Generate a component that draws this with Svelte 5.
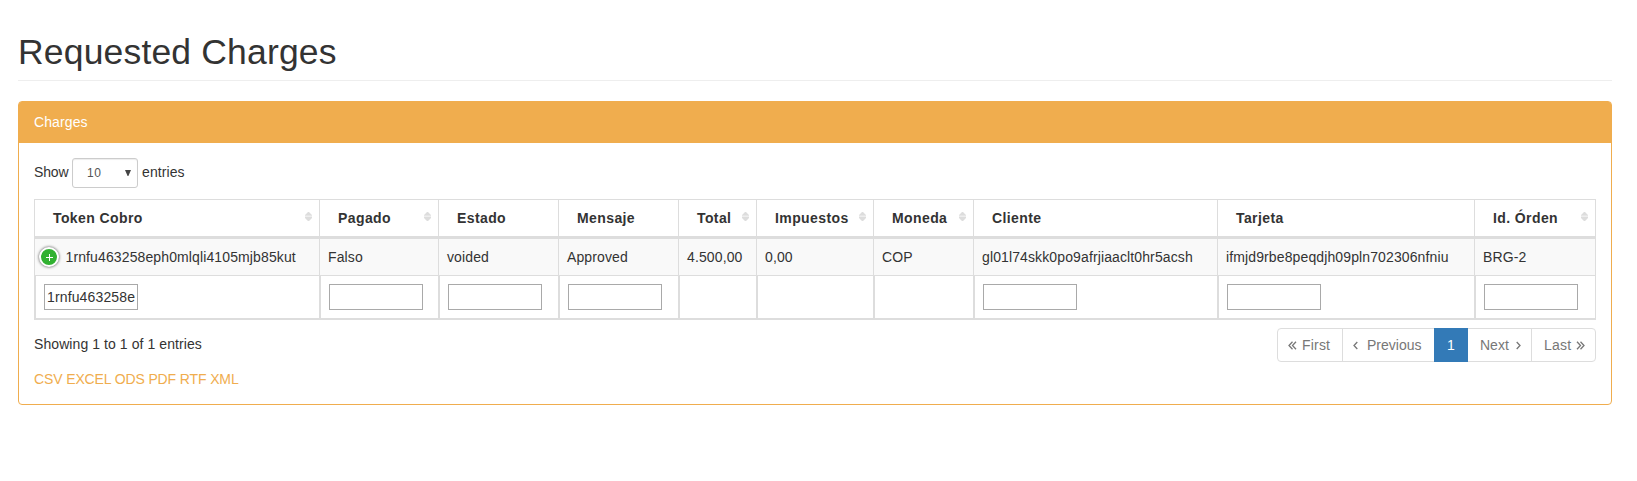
<script>
  const columns = [
    { label: 'Token Cobro', width: 285, sort: true, value: '1rnfu463258eph0mlqli4105mjb85kut', filter: '1rnfu463258eph0mlqli4105mjb85kut', expand: true },
    { label: 'Pagado', width: 119, sort: true, value: 'Falso', filter: '' },
    { label: 'Estado', width: 120, value: 'voided', filter: '' },
    { label: 'Mensaje', width: 120, value: 'Approved', filter: '' },
    { label: 'Total', width: 78, sort: true, value: '4.500,00' },
    { label: 'Impuestos', width: 117, sort: true, value: '0,00' },
    { label: 'Moneda', width: 100, sort: true, value: 'COP' },
    { label: 'Cliente', width: 244, value: 'gl01l74skk0po9afrjiaaclt0hr5acsh', filter: '' },
    { label: 'Tarjeta', width: 257, value: 'ifmjd9rbe8peqdjh09pln702306nfniu', filter: '' },
    { label: 'Id. Órden', width: 122, sort: true, value: 'BRG-2', filter: '' }
  ];
  const formats = ['CSV', 'EXCEL', 'ODS', 'PDF', 'RTF', 'XML'];
</script>

<main>
  <h1>Requested Charges</h1>
  <section class="panel">
    <header>Charges</header>
    <div class="body">
      <div class="length">
        <span class="show">Show</span>
        <span class="select"><span>10</span><svg width="6" height="6" viewBox="0 0 6 6"><path d="M0 0h6L3.4 6h-.8z" fill="#444" /></svg></span>
        <span class="entries">entries</span>
      </div>
      <table>
        <colgroup>
          {#each columns as c}<col style:width="{c.width}px" />{/each}
        </colgroup>
        <thead>
          <tr>
            {#each columns as c}
              <th><div class="head"><span>{c.label}</span>
                {#if c.sort}<svg width="7" height="9" viewBox="0 0 7 9"><path d="M3 0h1l3 3v1H0V3zM0 5h7v1L4 9H3L0 6z" fill="#ddd" /><path d="M0 3.5h7v1.5H0z" fill="#eee" /></svg>{/if}
              </div></th>
            {/each}
          </tr>
        </thead>
        <tbody>
          <tr>
            {#each columns as c}
              <td><div class="cell">
                {#if c.expand}<span class="plus"><svg width="7" height="7" viewBox="0 0 7 7"><path d="M3 0h1v3h3v1H4v3H3V4H0V3h3z" fill="#fff" /></svg></span>{/if}
                <span>{c.value}</span>
              </div></td>
            {/each}
          </tr>
        </tbody>
        <tfoot>
          <tr>
            {#each columns as c}
              <td>{#if c.filter !== undefined}<input type="text" value={c.filter} aria-label={c.label} />{/if}</td>
            {/each}
          </tr>
        </tfoot>
      </table>
      <div class="bottom">
        <div class="info">Showing 1 to 1 of 1 entries</div>
        <nav>
          <a class="first" href="#top"><svg width="9" height="9" viewBox="0 0 9 9"><path d="M4.5.7L1 4.5l3.5 3.8M8 .7L4.5 4.5 8 8.3" /></svg><span>First</span></a>
          <a class="prev" href="#top"><svg width="5" height="9" viewBox="0 0 5 9"><path d="M4.3 1L1 4.5 4.3 8" /></svg><span>Previous</span></a>
          <a class="current" href="#top">1</a>
          <a class="next" href="#top"><span>Next</span><svg width="5" height="9" viewBox="0 0 5 9"><path d="M.7 1L4 4.5.7 8" /></svg></a>
          <a class="last" href="#top"><span>Last</span><svg width="9" height="9" viewBox="0 0 9 9"><path d="M1 .7l3.5 3.8L1 8.3M4.5.7L8 4.5 4.5 8.3" /></svg></a>
        </nav>
      </div>
      <div class="export">{#each formats as f}<a href="#top">{f}</a>{' '}{/each}</div>
    </div>
  </section>
</main>

<style>
  :global(body) { background: #fff; }
  * { box-sizing: border-box; }
  main { padding: 31px 25px 0 18px; font: 14px/20px "Liberation Sans", Arial, sans-serif; color: #333; }
  h1 { margin: 0 0 20px; height: 50px; padding-top: 1px; font-size: 35.5px; font-weight: 400; line-height: 40px; letter-spacing: .17px; border-bottom: 1px solid #eee; }
  a { color: #f0ad4e; text-decoration: none; }
  .panel { border: 1px solid #f0ad4e; border-radius: 4px; height: 304px; }
  header { height: 41px; padding: 10px 15px; background: #f0ad4e; color: #fff; border-radius: 2px 2px 0 0; letter-spacing: .1px; }
  .body { padding: 15px 15px 0; }
  .length { display: flex; align-items: center; gap: 4px; height: 30px; margin-bottom: 11px; }
  .show { width: 34px; padding-bottom: 2px; letter-spacing: -.15px; }
  .entries { padding-bottom: 2px; letter-spacing: .1px; }
  .select { display: flex; align-items: center; justify-content: space-between; width: 66px; height: 30px; padding: 0 6px 0 14px; border: 1px solid #ccc; border-radius: 3px; box-shadow: inset 0 1px 1px rgba(0,0,0,.075); color: #555; font-size: 12px; letter-spacing: .5px; }
  table { width: 1562px; table-layout: fixed; border-collapse: separate; border-spacing: 0; }
  th, td { padding: 0; border-left: 1px solid #ddd; vertical-align: middle; text-align: left; white-space: nowrap; }
  th:last-child, td:last-child { border-right: 1px solid #ddd; }
  th { height: 40px; border-top: 1px solid #ddd; border-bottom: 3px solid #ddd; }
  .head { display: flex; align-items: center; justify-content: space-between; padding: 0 7px 0 18px; letter-spacing: .4px; }
  .head svg { margin-top: -4px; }
  tbody td { height: 37px; background: #f9f9f9; border-bottom: 1px solid #ddd; }
  .cell { display: flex; align-items: center; padding-left: 8px; letter-spacing: .12px; }
  .plus { display: flex; align-items: center; justify-content: center; width: 20px; height: 20px; margin: 0 6.5px 0 -4px; border: 2px solid #fff; border-radius: 50%; background: #31b131; box-shadow: 0 0 3px #444; }
  tfoot td { height: 44px; padding-left: 8px; border-left-width: 2px; border-bottom: 2px solid #ddd; }
  input { display: block; width: 94px; height: 26px; padding: 1px 2px; border: 1px solid #a9a9a9; font: inherit; letter-spacing: .14px; color: inherit; background: #fff; outline: 0; }
  .bottom { display: flex; justify-content: space-between; padding-top: 8px; }
  .info { padding-top: 6px; letter-spacing: .08px; }
  nav { display: flex; width: 319px; height: 34px; border: 1px solid #ddd; border-radius: 4px; }
  nav a { display: flex; align-items: center; color: #777; }
  nav svg { fill: none; stroke: #777; stroke-width: 1.3; }
  .first { width: 65px; padding-left: 10px; gap: 5px; border-right: 1px solid #ddd; letter-spacing: .2px; }
  .prev { width: 91px; padding-left: 10px; gap: 9px; }
  .current { width: 34px; height: 34px; margin-top: -1px; justify-content: center; color: #fff; background: #337ab7; }
  .next { width: 64px; padding-left: 12px; gap: 7px; border-right: 1px solid #ddd; }
  .last { padding-left: 12px; gap: 5px; letter-spacing: .2px; }
  .export { padding-top: 7px; letter-spacing: -.13px; }
</style>
